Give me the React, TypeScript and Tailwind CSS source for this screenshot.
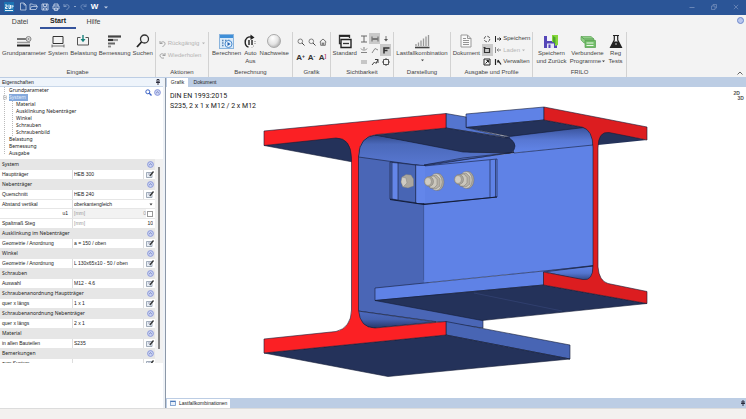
import React, { useId } from "react";
import type { ReactNode } from "react";

const FONT = "font-['Liberation_Sans',Arial,sans-serif]";
const NOTO = "font-['Noto_Sans',sans-serif]";

/* ---------- small icon helper ---------- */

type IconProps = { w: number; h: number; children: ReactNode; className?: string };

function Icon({ w, h, children, className }: IconProps) {
  return (
    <svg
      width={w}
      height={h}
      viewBox={`0 0 ${w} ${h}`}
      fill="none"
      stroke="currentColor"
      strokeWidth="1"
      className={`shrink-0 ${className ?? ""}`}
      aria-hidden="true"
    >
      {children}
    </svg>
  );
}

/* ---------- title bar ---------- */

function TitleButton({ label, children }: { label: string; children: ReactNode }) {
  return (
    <button type="button" aria-label={label} className="flex w-[11px] items-center justify-center">
      {children}
    </button>
  );
}

function TitleBar() {
  return (
    <header className="flex h-[15px] items-center bg-[#2b5597] pb-[2px] text-[#c3d0e6]">
      <div className="ml-[4px] mr-[3px] flex h-[10px] w-[10px] items-center justify-center bg-[#1d74b3] text-white">
        <Icon w={10} h={10}>
          <path d="M1 3H3V5H1.500V6.500H3.500M5 2.500V6.500M5 6.500H6.500V3M8 3V6.500M9 3.500V5M1 8.500H9" strokeWidth=".9" />
        </Icon>
      </div>
      <TitleButton label="Neu">
        <Icon w={8} h={9}>
          <path d="M1.500 1H5L7 3V8H1.500ZM5 1V3H7" strokeWidth=".8" />
        </Icon>
      </TitleButton>
      <TitleButton label="Öffnen">
        <Icon w={9} h={9}>
          <path d="M1 7.500V2H3.500L4.500 3H7.500V4.500M1 7.500L2.500 4.500H8.500L7 7.500Z" strokeWidth=".8" />
        </Icon>
      </TitleButton>
      <TitleButton label="Speichern">
        <Icon w={8} h={8}>
          <path d="M1 1H7V7H1ZM2.500 1V3.500H5.500V1M2.500 7V5H5.500V7" strokeWidth=".9" />
        </Icon>
      </TitleButton>
      <TitleButton label="Drucken">
        <Icon w={8} h={8}>
          <path d="M2 3V1H6V3M1 3H7V6H1ZM2.500 5H5.500V7.500H2.500Z" strokeWidth=".9" />
        </Icon>
      </TitleButton>
      <TitleButton label="Rückgängig">
        <Icon w={7} h={7} className="text-[#8ea6cc]">
          <path d="M1 1V3.500H3.500M1 3.500C3 1 6 1.500 6 3.500C6 5 5 6 3.500 6.500" strokeWidth=".8" />
        </Icon>
      </TitleButton>
      <i className="mx-[2px] block h-px w-[2px] bg-[#8ea6cc]" />
      <TitleButton label="Wiederholen">
        <Icon w={7} h={7} className="text-[#7491c0]">
          <path d="M6 1V3.500H3.500M6 3.500C4 1 1 1.500 1 3.500C1 5 2 6 3.500 6.500" strokeWidth=".8" />
        </Icon>
      </TitleButton>
      <button type="button" className="w-[11px] text-center text-[8px] font-bold leading-[10px] text-white">
        W
      </button>
      <TitleButton label="Leiste anpassen">
        <Icon w={4} h={4}>
          <path d="M0 1.500H4L2 3.500Z" fill="currentColor" stroke="none" />
        </Icon>
      </TitleButton>
      <div className="ml-auto flex items-center gap-[16px] pr-[7px] text-[#7892bf]">
        <button type="button" aria-label="Minimieren">
          <Icon w={6} h={6} className="block">
            <path d="M.5 3.500H5.500" strokeWidth=".8" />
          </Icon>
        </button>
        <button type="button" aria-label="Verkleinern">
          <Icon w={6} h={6} className="block">
            <path d="M.5 2H4V5.500H.5ZM2 2V.5H5.500V4H4" strokeWidth=".7" />
          </Icon>
        </button>
        <button type="button" aria-label="Schließen">
          <Icon w={6} h={6} className="block">
            <path d="M.8.8L5.200 5.200M5.200.8L.8 5.200" strokeWidth=".7" />
          </Icon>
        </button>
      </div>
    </header>
  );
}

function MenuTabs() {
  return (
    <nav className="flex h-[14px] items-stretch bg-[#f3f3f3] text-[7px] text-[#444]">
      <button type="button" className="w-[40px]">Datei</button>
      <button type="button" className="w-[36px] border-b-2 border-[#35549c] font-bold text-[#222]">Start</button>
      <button type="button" className="w-[35px]">Hilfe</button>
      <button
        type="button"
        aria-label="Information"
        className="ml-auto mr-[2px] mt-[2px] flex h-[7px] w-[7px] items-center justify-center rounded-full border border-[#6d88cc] bg-[#b9c7ee]"
      />
    </nav>
  );
}

/* ---------- ribbon ---------- */

function Group({ title, className, children }: { title: string; className: string; children: ReactNode }) {
  return (
    <section className={`flex shrink-0 flex-col pt-[3px] ${className}`}>
      <div className="flex flex-1 border-r border-[#d2d2d2]">
        <div className="flex w-full flex-col pt-px">
          <div className="flex h-[35px] items-start justify-evenly">{children}</div>
          <h2 className="text-center leading-[8px] text-[#444]">{title}</h2>
        </div>
      </div>
    </section>
  );
}

function BigButton({ icon, lines, drop }: { icon: ReactNode; lines: string[]; drop?: boolean }) {
  return (
    <button type="button" className="flex flex-col items-center leading-[8px]">
      <span className="flex h-[16px] items-center">{icon}</span>
      {lines.map((line, i) => (
        <span key={line} className="flex items-center whitespace-nowrap">
          {line}
          {drop && i === lines.length - 1 && lines.length > 1 && <DropMark />}
        </span>
      ))}
      {drop && lines.length === 1 && (
        <span className="flex h-[6px] items-center">
          <DropMark />
        </span>
      )}
    </button>
  );
}

function DropMark() {
  return (
    <Icon w={4} h={3}>
      <path d="M1 .5H4L2.500 2.200Z" fill="currentColor" stroke="none" />
    </Icon>
  );
}

const parameterIcon = (
  <Icon w={16} h={14}>
    <path d="M1 5H10" stroke="#777" strokeWidth="2" />
    <path d="M1 8.500H14" stroke="#999" strokeWidth="1.500" />
    <path d="M1 11.500H14" stroke="#222" strokeWidth="2" />
    <circle cx="12.500" cy="5" r="2.500" fill="#ddd" stroke="#888" />
    <circle cx="12.500" cy="5" r=".8" fill="#777" stroke="none" />
  </Icon>
);
const systemIcon = (
  <Icon w={14} h={14}>
    <path d="M2 2.500H12V9.500H2Z" stroke="#333" />
    <path d="M1 12H13M1 10.500V13.500M13 10.500V13.500" stroke="#555" strokeWidth=".8" />
  </Icon>
);
const loadIcon = (
  <Icon w={14} h={14}>
    <path d="M4.500 3.500H1.500V11H12.500V3.500H9.500" stroke="#555" />
    <path d="M7 1V6" stroke="#16807a" strokeWidth="1.400" />
    <path d="M4.500 5H9.500L7 8.200Z" fill="#16807a" stroke="none" />
  </Icon>
);
const designIcon = (
  <Icon w={15} h={14}>
    <path d="M1 2.500H14" stroke="#444" strokeWidth="2.200" />
    <path d="M1 6H6" stroke="#333" strokeWidth="2.200" />
    <path d="M6 6H11" stroke="#999" strokeWidth="2.200" />
    <path d="M1 9.500H8" stroke="#666" strokeWidth="2" />
    <path d="M1 12.500H4" stroke="#888" strokeWidth="1.800" />
  </Icon>
);
const searchIcon = (
  <Icon w={14} h={14}>
    <circle cx="8.500" cy="5" r="4" stroke="#333" strokeWidth="1.300" />
    <path d="M5.500 8L1 13" stroke="#222" strokeWidth="1.800" />
  </Icon>
);
const calcIcon = (
  <Icon w={15} h={15}>
    <rect x=".5" y=".5" width="14" height="14" fill="#d9e9f8" stroke="#8ab4dd" />
    <path d="M1 2.500H14" stroke="#3f8fd8" strokeWidth="3" />
    <path d="M3 6.500H4.500M6 6.500H7.500M9 6.500H10.500M3 9H4.500M3 11.500H4.500" stroke="#5a86b8" strokeWidth="1.400" />
    <circle cx="9.500" cy="10" r="3.500" fill="#e9f3fc" stroke="#4a8bd0" />
    <path d="M8.500 8L11.500 10L8.500 12Z" fill="#1f5fae" stroke="none" />
  </Icon>
);
const autoIcon = (
  <Icon w={12} h={15}>
    <path d="M8 3.200C3.500 2 1.200 5 1.200 8.200C1.200 10.500 2.500 12.500 4.500 13.200" stroke="#222" strokeWidth="1.400" />
    <path d="M6.500.5L10.500 3.500L6.500 6Z" fill="#222" stroke="none" />
    <path d="M5 6V11M8 6V11" stroke="#222" strokeWidth="1.400" />
    <path d="M11 7V10M10 11.500L8 13.500" stroke="#777" strokeDasharray="1 1" />
  </Icon>
);
const docIcon = (
  <Icon w={12} h={14}>
    <path d="M1 1H7.500L11 4.500V13H1ZM7.500 1V4.500H11" fill="#f9f9f9" stroke="#999" />
    <path d="M3 4.500H6M3 6.500H9M3 8.500H9M3 10.500H9" stroke="#888" strokeWidth=".9" />
  </Icon>
);
const standardIcon = (
  <Icon w={14} h={15}>
    <path d="M4 9.500H1.500V1.500H11.500V4" stroke="#333" strokeWidth="1.300" />
    <path d="M1.500 2H11.500" stroke="#222" strokeWidth="1.800" />
    <path d="M3 5.500H13V13.500H3Z" fill="#f3f3f3" stroke="#222" strokeWidth="1.400" />
    <path d="M5 9.500H11" stroke="#333" strokeWidth="1.300" />
  </Icon>
);
const barsIcon = (
  <Icon w={16} h={15}>
    <path d="M2 12V10M4.500 12V8.500M7 12V6.500M9.500 12V4.500M12 12V2.500M14.500 12V1" stroke="#999" strokeWidth="1.300" />
    <path d="M1 13.500H15.500" stroke="#444" strokeWidth="1.600" />
  </Icon>
);
const saveBackIcon = (
  <Icon w={16} h={15}>
    <path d="M1 2H14V14H1Z" fill="#5546b8" stroke="none" />
    <path d="M4 2H9V7H4Z" fill="#f4f3fb" stroke="none" />
    <path d="M4 9.500H11V14H4Z" fill="#e8e6f6" stroke="none" />
    <path d="M5.500 10.500H7.500V14H5.500Z" fill="#5546b8" stroke="none" />
    <path d="M9 1H15V11L12 12V8H9Z" fill="#86d63a" stroke="none" />
    <path d="M10 2L12.500 3.500V10L10 8Z" fill="#4ca62c" stroke="none" />
  </Icon>
);
const linkedIcon = (
  <Icon w={16} h={15}>
    <path d="M1 2.500H11L14 5V9H4L1 6Z" fill="#8fce86" stroke="#61a95a" strokeWidth=".7" />
    <path d="M1 2.500L4 5H14" stroke="#4b9646" strokeWidth=".8" />
    <path d="M5 6.500H15.500V13.500H5Z" fill="#71bd68" stroke="#549e4e" strokeWidth=".7" />
    <path d="M6.500 9H13.500M6.500 11.500H13.500" stroke="#ecf8ea" />
  </Icon>
);
const flaskIcon = (
  <Icon w={14} h={15}>
    <path d="M4 1.500H10M5.300 1.500V6L1.500 13.500H12.500L8.700 6V1.500" fill="#f3f3f3" stroke="#222" strokeWidth="1.200" />
    <path d="M4.500 7.500H9.500L12.500 13.500H1.500Z" fill="#222" stroke="none" />
    <circle cx="7" cy="10" r=".8" fill="#ddd" stroke="none" />
  </Icon>
);

function CellButton({ label, active, children }: { label: string; active?: boolean; children: ReactNode }) {
  return (
    <button
      type="button"
      aria-label={label}
      className={`flex items-center justify-center ${active ? "bg-[#c9c9c9]" : ""}`}
    >
      {children}
    </button>
  );
}

function LetterA({ mark, color }: { mark: string; color: string }) {
  return (
    <button type="button" className="flex items-start justify-center pt-[3px] text-[8px] font-bold leading-[10px] text-[#333]">
      A
      <span className={`text-[5px] leading-[6px] ${color}`}>{mark}</span>
    </button>
  );
}

function ProfileRow({ icon, label, disabled }: { icon: ReactNode; label: string; disabled?: boolean }) {
  return (
    <button type="button" disabled={disabled} className="flex items-center gap-px disabled:text-[#b5b5b5]">
      {icon}
      {label}
      {disabled && <DropMark />}
    </button>
  );
}

function Ribbon() {
  return (
    <div className="flex h-[48px] bg-[#f3f3f3] text-[6px] text-[#444]">
      <Group title="Eingabe" className="w-[156px]">
        <BigButton icon={parameterIcon} lines={["Grundparameter"]} />
        <BigButton icon={systemIcon} lines={["System"]} />
        <BigButton icon={loadIcon} lines={["Belastung"]} />
        <BigButton icon={designIcon} lines={["Bemessung"]} />
        <BigButton icon={searchIcon} lines={["Suchen"]} />
      </Group>
      <Group title="Aktionen" className="w-[53px]">
        <div className="flex flex-col gap-[4px] pt-[6px] leading-[8px] text-[#b3b3b3]">
          <button type="button" className="flex items-center gap-[2px]">
            <Icon w={7} h={7}>
              <path d="M1 1V3.500H3.500M1 3.500C3 1 6 1.500 6 3.500C6 5 5 6 3.500 6.500" stroke="#999" strokeWidth=".9" />
            </Icon>
            Rückgängig
            <DropMark />
          </button>
          <button type="button" className="flex items-center gap-[2px]">
            <Icon w={7} h={7}>
              <path d="M6 1V3.500H3.500M6 3.500C4 1 1 1.500 1 3.500C1 5.500 3 6.500 5 6" stroke="#999" strokeWidth=".9" />
            </Icon>
            Wiederholen
          </button>
        </div>
      </Group>
      <Group title="Berechnung" className="w-[84px]">
        <BigButton icon={calcIcon} lines={["Berechnen"]} />
        <BigButton icon={autoIcon} lines={["Auto", "Aus"]} />
        <BigButton
          icon={<span className="h-[14px] w-[14px] rounded-full border border-[#aaa] bg-radial-[at_40%_25%] from-white via-[#e4e4e4] to-[#8c8c8c]" />}
          lines={["Nachweise"]}
        />
      </Group>
      <Group title="Grafik" className="w-[38px]">
        <div className="grid grid-cols-[11px_11px_11px] grid-rows-[16px_14px] pt-px">
          <CellButton label="Vergrößern">
            <Icon w={8} h={8}>
              <circle cx="3.300" cy="3.300" r="2.300" stroke="#666" strokeWidth=".8" />
              <path d="M5 5L7.500 7.500" stroke="#444" />
            </Icon>
          </CellButton>
          <CellButton label="Verkleinern">
            <Icon w={8} h={8}>
              <circle cx="3.300" cy="3.300" r="2.300" stroke="#666" strokeWidth=".8" />
              <path d="M5 5L7.500 7.500" stroke="#444" />
            </Icon>
          </CellButton>
          <CellButton label="Gesamtansicht">
            <Icon w={8} h={8}>
              <path d="M.7 4L4 1L7.300 4M1.700 3.500V7.300H6.300V3.500M3.300 7V5H4.700V7" stroke="#555" strokeWidth=".8" />
            </Icon>
          </CellButton>
          <LetterA mark="+" color="text-[#333]" />
          <LetterA mark="-" color="text-[#333]" />
          <LetterA mark="]" color="text-[#b03060]" />
        </div>
      </Group>
      <Group title="Sichtbarkeit" className="w-[63px]">
        <BigButton icon={standardIcon} lines={["Standard"]} />
        <div className="grid grid-cols-[11px_11px_11px] grid-rows-[11px_12px_11px] text-[#444]">
          <CellButton label="Profil">
            <Icon w={8} h={8}><path d="M1 1H7M1 7H7M4 1V7" stroke="#666" /></Icon>
          </CellButton>
          <CellButton label="Bemaßung" active>
            <Icon w={8} h={8}><path d="M1 1.500V6.500M7 1.500V6.500M1 4H7M3 3V5M5 3V5" stroke="#555" strokeWidth=".9" /></Icon>
          </CellButton>
          <CellButton label="Last">
            <Icon w={6} h={8}><path d="M3 1V5" stroke="#777" /><path d="M1 4H5L3 6.500Z" fill="#555" stroke="none" /></Icon>
          </CellButton>
          <CellButton label="Auflager">
            <Icon w={8} h={8}><path d="M1 6.500H7M4 1V4.500M1 2.500L3 4.500M7 2.500L5 4.500" stroke="#777" strokeWidth=".9" /></Icon>
          </CellButton>
          <CellButton label="Kraft">
            <Icon w={8} h={8}><path d="M1 7L4 2.500L7 4" stroke="#888" /></Icon>
          </CellButton>
          <CellButton label="Winkel" active>
            <Icon w={8} h={8}><path d="M2 7.500V2H7.500M2 4.500H5.500" stroke="#333" strokeWidth="1.600" /></Icon>
          </CellButton>
          <CellButton label="Ebene">
            <Icon w={8} h={8}><path d="M1 3H7M1 5H7" stroke="#999" /></Icon>
          </CellButton>
          <CellButton label="Verlauf">
            <Icon w={8} h={8}><path d="M1 7L3.500 4L5 5.500L7 1.500M4 1.500H7V5" stroke="#444" /></Icon>
          </CellButton>
          <CellButton label="Ansicht">
            <Icon w={8} h={8}><path d="M1.500 1.500H6.500V6.500H1.500Z" stroke="#555" /><path d="M4 0V1.500M4 6.500V8M0 4H1.500M6.500 4H8" stroke="#555" /></Icon>
          </CellButton>
        </div>
      </Group>
      <Group title="Darstellung" className="w-[57px]">
        <BigButton icon={barsIcon} lines={["Lastfallkombination"]} drop />
      </Group>
      <Group title="Ausgabe und Profile" className="w-[82px]">
        <BigButton icon={docIcon} lines={["Dokument"]} />
        <div className="grid grid-cols-[11px] grid-rows-[11px_12px_11px]">
          <CellButton label="Aktualisieren">
            <Icon w={8} h={8}><circle cx="4" cy="4" r="2.800" stroke="#555" strokeDasharray="3 1.400" /></Icon>
          </CellButton>
          <CellButton label="Ausschnitt" active>
            <Icon w={8} h={8}><path d="M1.500 2.500H6.500V6.500H1.500Z" stroke="#333" strokeWidth="1.200" /><path d="M.5 1.500H2.500" stroke="#333" /></Icon>
          </CellButton>
          <CellButton label="Vollbild">
            <Icon w={8} h={8}><path d="M1 1H7V7H1ZM2.500 5.500L5.500 2.500M3.500 2.500H5.500V4.500" stroke="#222" /></Icon>
          </CellButton>
        </div>
        <div className="grid grid-rows-[11px_12px_11px]">
          <ProfileRow
            label="Speichern"
            icon={<Icon w={8} h={8}><path d="M1.500 1V7M3 4H7M5.500 2.500L7 4L5.500 5.500" stroke="#222" /></Icon>}
          />
          <ProfileRow
            label="Laden"
            disabled
            icon={<Icon w={8} h={8}><path d="M1.500 1V7M3 4H7M4.500 2.500L3 4L4.500 5.500" stroke="#888" /></Icon>}
          />
          <ProfileRow
            label="Verwalten"
            icon={<Icon w={8} h={8}><path d="M1.500 1V7M3 4H5M4 2L7 6.500M4 2V4.500" stroke="#222" strokeWidth="1.200" /></Icon>}
          />
        </div>
      </Group>
      <Group title="FRILO" className="w-[94px]">
        <BigButton icon={saveBackIcon} lines={["Speichern", "und Zurück"]} />
        <BigButton icon={linkedIcon} lines={["Verbundene", "Programme"]} drop />
        <BigButton icon={flaskIcon} lines={["Reg", "Tests"]} />
      </Group>
      <button type="button" aria-label="Menüband reduzieren" className="ml-auto mr-[3px] self-end pb-[2px]">
        <Icon w={6} h={4} className="block"><path d="M.5 3.500L3 1L5.500 3.500" stroke="#555" strokeWidth=".9" /></Icon>
      </button>
    </div>
  );
}

/* ---------- property panel ---------- */

const subNodes = ["Material", "Ausklinkung Nebenträger", "Winkel", "Schrauben", "Schraubenbild"];

function ChevronDisc() {
  return (
    <Icon w={7} h={7}>
      <circle cx="3.500" cy="3.500" r="2.900" fill="#ccd5f3" stroke="#8492d8" strokeWidth=".9" />
      <path d="M2.200 4L3.500 2.800L4.800 4" stroke="#5462b0" strokeWidth=".8" />
    </Icon>
  );
}

function Tree() {
  return (
    <div className={`flex h-[72px] justify-between pr-[2px] text-[5px] leading-[7px] text-[#222] ${NOTO}`}>
      <ul className="ml-[4px] mb-[5px] border-l border-dotted border-[#bbb]">
        <li className="pl-[4px]">Grundparameter</li>
        <li>
          <div className="flex items-center">
            <Icon w={4} h={5} className="-ml-[2px] mr-[2px]">
              <rect x=".4" y=".9" width="3.200" height="3.200" fill="#fff" stroke="#999" strokeWidth=".5" />
              <path d="M1 2.500H3" stroke="#777" strokeWidth=".5" />
            </Icon>
            <span className="bg-[#84a9dc] pr-[2px] text-[#e3edfa]">System</span>
          </div>
          <ul className="ml-[7px] border-l border-dotted border-[#bbb] pl-[3px]">
            {subNodes.map((n) => (
              <li key={n}>{n}</li>
            ))}
          </ul>
        </li>
        <li className="pl-[4px]">Belastung</li>
        <li className="pl-[4px]">Bemessung</li>
        <li className="pl-[4px]">Ausgabe</li>
      </ul>
      <div className="flex h-[10px] items-center gap-[2px]">
        <button type="button" aria-label="Suchen">
          <Icon w={7} h={7} className="block">
            <circle cx="2.800" cy="2.800" r="2" stroke="#3b62c4" />
            <path d="M4.300 4.300L6.500 6.500" stroke="#3b62c4" strokeWidth="1.300" />
          </Icon>
        </button>
        <button type="button" aria-label="Alle zuklappen">
          <ChevronDisc />
        </button>
      </div>
    </div>
  );
}

function SectionHead({ title }: { title: string }) {
  return (
    <h3 className={`flex h-[11px] items-center justify-between bg-[#e6e6e6] pl-[2px] pr-px ${NOTO}`}>
      {title}
      <button type="button" aria-label={`${title} zuklappen`}>
        <ChevronDisc />
      </button>
    </h3>
  );
}

function Row({ label, value }: { label: string; value: string }) {
  const id = useId();
  return (
    <div className="flex h-[9px] items-center">
      <label htmlFor={id} className="w-[72px] pl-[2px]">{label}</label>
      <input id={id} defaultValue={value} className="h-full w-0 flex-1 border-l border-[#ddd] pb-[2px] pl-px outline-none" />
      <button type="button" aria-label={`${label} bearbeiten`} className="flex h-full w-[12px] items-center justify-center border-l border-[#ddd]">
        <Icon w={8} h={7}>
          <path d="M.5 1.500H6V6.500H.5Z" fill="#e8eef6" stroke="#8b98a8" strokeWidth=".8" />
          <path d="M2 3H4" stroke="#779" strokeWidth=".6" />
          <path d="M7.500.5L3.800 5" stroke="#333" strokeWidth="1.300" />
        </Icon>
      </button>
    </div>
  );
}

function PropertyRows() {
  return (
    <div className="flex h-[204px] overflow-hidden bg-[#f1f1f1] text-[5px] leading-[7px] text-[#222]">
      <div className="w-[155px] bg-white">
        <SectionHead title="System" />
        <Row label="Hauptträger" value="HEB 300" />
        <SectionHead title="Nebenträger" />
        <Row label="Querschnitt" value="HEB 240" />
        <div className="flex h-[9px] items-center border-t border-[#e6e6e6]">
          <label htmlFor="vertical" className="w-[72px] pl-[2px]">Abstand vertikal</label>
          <select id="vertical" className="h-full w-0 flex-1 appearance-none border-l border-[#ddd] pl-px">
            <option>oberkantengleich</option>
          </select>
          <Icon w={6} h={3} className="mr-px"><path d="M1.500.5H4.500L3 2.500Z" fill="#333" stroke="none" /></Icon>
        </div>
        <div className="flex h-[10px] items-center border-t border-[#e6e6e6]">
          <label htmlFor="u1" className="w-[72px] pr-[4px] text-right">u1</label>
          <span className="flex h-full flex-1 items-center border-l border-[#ddd] bg-[#f2f2f2] pl-px text-[#999]">
            [mm]
            <input id="u1" defaultValue="0" className="w-0 flex-1 text-right outline-none" />
          </span>
          <input
            type="checkbox"
            aria-label="u1 vorgeben"
            className="ml-px mr-[2px] h-[6px] w-[6px] appearance-none border border-[#999] bg-white"
          />
        </div>
        <div className="flex h-[10px] items-center border-t border-[#e6e6e6]">
          <label htmlFor="gap" className="w-[72px] pl-[2px]">Spaltmaß Steg</label>
          <span className="flex h-full flex-1 items-center border-l border-[#ddd] pl-px text-[#999]">
            [mm]
            <input id="gap" defaultValue="10" className="w-0 flex-1 pr-[2px] text-right text-[#222] outline-none" />
          </span>
        </div>
        <SectionHead title="Ausklinkung im Nebenträger" />
        <Row label="Geometrie / Anordnung" value="a = 150 / oben" />
        <SectionHead title="Winkel" />
        <Row label="Geometrie / Anordnung" value="L 130x65x10 - 50 / oben" />
        <SectionHead title="Schrauben" />
        <Row label="Auswahl" value="M12 - 4.6" />
        <SectionHead title="Schraubenanordnung Hauptträger" />
        <Row label="quer x längs" value="1 x 1" />
        <SectionHead title="Schraubenanordnung Nebenträger" />
        <Row label="quer x längs" value="2 x 1" />
        <SectionHead title="Material" />
        <Row label="in allen Bauteilen" value="S235" />
        <SectionHead title="Bemerkungen" />
        <Row label="zum System" value="" />
      </div>
      <div className="ml-[3px] mb-[14px] mt-[8px] w-[2px] bg-[#858585]" />
    </div>
  );
}

function PropertyPanel() {
  return (
    <aside className="flex w-[163px] shrink-0 flex-col bg-white">
      <div className="flex h-[9px] items-center justify-between border-b border-[#c9d8ea] bg-[#eef4fb] pl-[2px] pr-[3px] text-[5px] leading-[7px] text-[#222]">
        Eigenschaften
        <button type="button" aria-label="Anheften">
          <Icon w={4} h={6} className="block"><path d="M1 .5H3V3H1ZM0 3.500H4M2 3.500V6" stroke="#223" strokeWidth=".9" /></Icon>
        </button>
      </div>
      <Tree />
      <PropertyRows />
    </aside>
  );
}

/* ---------- 3D view ---------- */

function Bolt({ x, y }: { x: number; y: number }) {
  return (
    <g transform={`translate(${x} ${y})`} stroke="#6f6c66" strokeWidth=".4">
      <ellipse cx="5" cy="0" rx="6" ry="8.500" fill="#aaa69f" />
      <ellipse cx="3" cy="0" rx="6" ry="8.500" fill="#d2cec5" />
      <path d="M-3 -5.500L3 -7L7 -3V4L3 7L-3 6L-5 0Z" fill="#b5b0a6" />
      <path d="M-3 -5.500L1 -6L4 -2.500V3L1 6L-3 6L-5 0Z" fill="#cbc7bd" />
      <ellipse cx="-4" cy="-.5" rx="4.500" ry="5" fill="#a8a49c" />
      <ellipse cx="-5" cy="-.5" rx="3.400" ry="4" fill="#cfcbc2" />
    </g>
  );
}

function BeamModel() {
  return (
    <svg viewBox="166 87 580 311" className="block w-full" role="img" aria-label="3D-Ansicht des Trägeranschlusses">
      <defs>
        <linearGradient id="upperFillet" x1="0" y1="0" x2="0" y2="1">
          <stop offset="0" stopColor="#304787" />
          <stop offset=".3" stopColor="#4b69ba" />
          <stop offset="1" stopColor="#5878d2" />
        </linearGradient>
        <linearGradient id="rearFillet" x1="0" y1="0" x2="0" y2="1">
          <stop offset="0" stopColor="#3a539b" />
          <stop offset=".5" stopColor="#5878d4" />
          <stop offset="1" stopColor="#6286ea" />
        </linearGradient>
        <linearGradient id="rearLowerFillet" x1="0" y1="0" x2="0" y2="1">
          <stop offset="0" stopColor="#6286ea" />
          <stop offset=".5" stopColor="#5475cf" />
          <stop offset="1" stopColor="#2c4079" />
        </linearGradient>
        <linearGradient id="lowerFillet" x1="0" y1="0" x2="0" y2="1">
          <stop offset="0" stopColor="#4e6bc0" />
          <stop offset=".5" stopColor="#4460ad" />
          <stop offset="1" stopColor="#263768" />
        </linearGradient>
      </defs>
      <g stroke="#141d38" strokeWidth=".6" strokeLinejoin="round">
        {/* webs */}
        <path d="M358 156L424 163V280L483 318V328L358 311Z" fill="#4a66b6" />
        <path d="M424 164L514 153L593 144V266L424 283Z" fill="#5f82e6" stroke="none" />
        <path d="M424 163V283" stroke="#5272cb" />
        {/* rear beam, upper flange */}
        <path d="M466 114L544 107V120L466 127.500Z" fill="#5f82e6" />
        <path d="M466 127.500L544 120L587 128L512 137Z" fill="#24325a" />
        <path d="M505 137L584 127.500Q593 131 593 145L514 153Z" fill="url(#rearFillet)" />
        {/* front beam, upper flange */}
        <path d="M446 113.500L466 117V127.500L510 138L446 128Z" fill="#5475cf" />
        <path d="M358.500 157Q359 136 376 135L470 152L509 153L514 152L424 166Z" fill="url(#upperFillet)" />
        <path d="M375 135L446 128L510 138.500Q515 142 515 146Q514 153 509 153L463 152Z" fill="#24325a" />
        {/* rear beam, lower flange */}
        <path d="M543 271.500L593 265.500V281H585Z" fill="url(#rearLowerFillet)" />
        <path d="M375 288L593 266L543.500 272V285L375 300.500Z" fill="#5f82e6" />
        <path d="M375 300.500L543.500 285L647 303.500L482 320.500Z" fill="#24325a" />
        <path d="M474 293L562 311" stroke="#3c4d80" strokeWidth=".5" />
        {/* rear beam section */}
        <path d="M597 130L604 130L647 140L598 145Z" fill="#24325a" stroke="none" />
        <path
          d="M544 107L647 127V140L609 132.500Q598 131 598 148V267Q599 281 608 283.500L647 291.500V303.500L543.500 285V272L583 279.500Q593 281 593 266V148Q593 130 582 127L544 120Z"
          fill="#dc1d20"
        />
        {/* front beam, lower flange */}
        <path d="M358 311L436 322L375 328Q359 328 358 311Z" fill="url(#lowerFillet)" />
        <path d="M446 321.500L570 345V359L446 335Z" fill="#4865b4" />
        <path d="M264 353L446 335L570 359L388 376.500Z" fill="#24325a" />
        {/* front beam section */}
        <path d="M264 145.500L336 137H353V162Z" fill="#24325a" />
        <path
          d="M264 131L446 113.500V128L377 134.500Q359 136 358.500 156V310Q360 328 375 328L446 321.500V335L264 353V339L336 331.500Q351 328 351.500 310V158Q351 138 336 138L264 145.500Z"
          fill="#fb2024"
        />
        {/* cleat angle */}
        <path d="M390 162L424 166V204L390 199Z" fill="#4865b4" />
        <path d="M392 162.500L398 163V200L392 199Z" fill="#6486e8" />
        <path d="M415.500 165L426 165.500V203.500L415.500 203Z" fill="#5878d4" />
        <path d="M424 166L497 159V197L424 204Z" fill="#5f82e6" />
        <path d="M490 160V197.500M495.500 159.500V197" />
        <path d="M390 199.500L424 204.500L497 197" fill="none" strokeWidth="1.100" />
        <path d="M424 165L514 152.500L463 158Z" fill="#5675ce" />
      </g>
      <path d="M417 166H425V203H417Z" fill="#6386ea" />
      <g stroke="#777" strokeWidth=".4">
        <path d="M402 177L406 174.500L411 175L413.500 179V186L408 188L403 187L401 182Z" fill="#aaa69f" />
        <path d="M402 177L406 178L407 183L403 187L401 182Z" fill="#cfcbc2" />
      </g>
      <Bolt x={433} y={182} />
      <Bolt x={463} y={180} />
    </svg>
  );
}

function Workspace() {
  return (
    <section className="flex min-w-0 flex-1 flex-col border-l border-[#8c98a8]">
      <div className="flex h-[9px] shrink-0 items-end bg-[#bccde4] text-[5px] leading-[7px] text-[#222]">
        <button type="button" className="ml-px h-[9px] w-[21px] bg-white pb-px">Grafik</button>
        <button type="button" className="h-[9px] w-[34px] pb-px">Dokument</button>
      </div>
      <div className="relative flex-1 bg-white">
        <BeamModel />
        <div className="absolute left-[4px] top-[4px] font-[Roboto,sans-serif] text-[7px] leading-[10px] text-[#222]">
          <p>DIN EN 1993:2015</p>
          <p>S235, 2 x 1 x M12 / 2 x M12</p>
        </div>
        <button
          type="button"
          className="absolute right-[2px] top-[4px] flex flex-col items-start text-[5px] font-bold leading-[5px] text-[#555]"
        >
          <span>2D</span>
          <span className="pl-[4px]">3D</span>
        </button>
      </div>
      <div className="flex h-[10px] shrink-0 items-center justify-between bg-[#bccde4] pr-px text-[5px] leading-[8px] text-[#222]">
        <button type="button" className="ml-px flex h-[9px] items-center gap-[3px] bg-white px-[3px]">
          <Icon w={6} h={6}>
            <rect x=".5" y="1" width="5" height="4.500" fill="#e7effa" stroke="#6f94c8" strokeWidth=".8" />
            <path d="M.5 1.500H5.500" stroke="#4a78b8" />
          </Icon>
          Lastfallkombinationen
        </button>
        <button type="button" aria-label="Einblenden">
          <Icon w={4} h={6} className="block"><path d="M1 1H3V3H1ZM0 3.500H4M2 3.500V6" stroke="#223" strokeWidth=".9" /></Icon>
        </button>
      </div>
    </section>
  );
}

export default function App() {
  return (
    <div className={`flex min-h-screen flex-col overflow-hidden bg-white ${FONT}`}>
      <TitleBar />
      <MenuTabs />
      <Ribbon />
      <main className="flex flex-1 border-t border-[#bccde4]">
        <PropertyPanel />
        <div className="w-[2px] shrink-0 bg-[#eef2f7]" />
        <Workspace />
      </main>
      <footer className="h-[11px] shrink-0 border-t border-[#dcdcdc] bg-[#f3f1ef]" />
    </div>
  );
}
